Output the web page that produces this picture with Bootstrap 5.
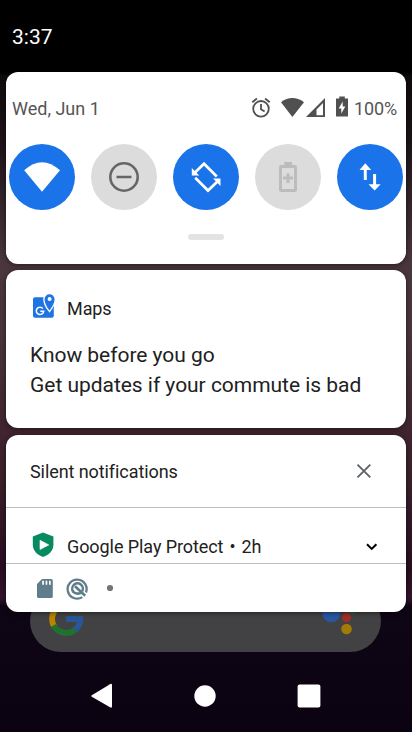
<!DOCTYPE html>
<html lang="en">
<head>
<meta charset="utf-8">
<meta name="viewport" content="width=device-width, initial-scale=1">
<title>Notification shade</title>
<link href="https://cdn.jsdelivr.net/npm/bootstrap@5.3.0/dist/css/bootstrap.min.css" rel="stylesheet">
<style>
body{font-family:Roboto,"Noto Sans",sans-serif;background:#000;color:#212121}
.screen{width:412px;height:732px;background:linear-gradient(#000 0,#000 72px,#0f0b0d 76px,#1c1317 140px,#35262b 205px,#4a363d 262px,#4a353d 330px,#40242f 432px,#3a212b 480px,#280e20 568px,#34142a 598px,#0e0515 606px,#0b0212 732px)}
.status{height:72px;padding:0 12px;font-size:21px;line-height:75px}
.panel{background:#fff;border:0;border-radius:12px;margin:0 6px;overflow:hidden;z-index:1;box-shadow:0 1px 5px rgba(0,0,0,.5)}
.quick{height:192px;margin-bottom:6px}
.maps{height:158px;margin-bottom:7px;padding:23px 24px 0}
.silent{height:177px}
.sysline{height:72px;padding:0 9px 0 6px;font-size:18px;color:#555}
.percent{margin-left:6px;letter-spacing:-.15px}
.tiles{padding:0 3px}
.tile{width:66px;height:66px;background:#dcdcdc}
.tile.on{background:#1a73e8}
.grip{width:36px;height:6px;background:#e3e3e3;margin-top:24px}
.app{font-size:18px;line-height:30px;letter-spacing:-.08px}
.message{font-size:21px;line-height:30px;margin-top:17px;letter-spacing:-.03px}
.nudge{padding-top:2px;line-height:28px}
.line{border-bottom:1px solid #bdbdbd}
.heading{height:73px}
.entry{height:56px}
.entry span{padding-bottom:1px}
.dot{margin:0 6px}
.search{height:62px;margin:-22px 31px 0 30px;background:#424143;border-radius:31px;padding:0 26px 0 18px}
.keys{height:72px;margin-top:8px;padding:0 91px}
svg{display:block;flex:none}
</style>
</head>
<body>
<main class="screen d-flex flex-column overflow-hidden">
  <header class="status text-white flex-shrink-0">3:37</header>

  <section class="panel card quick flex-shrink-0">
    <div class="sysline d-flex align-items-center justify-content-between">
      <span>Wed, Jun 1</span>
      <div class="d-flex align-items-center">
        <svg width="100" height="28" viewBox="248 94 100 28" fill="#505050">
          <circle cx="261" cy="108.8" r="7.8" fill="none" stroke="#505050" stroke-width="1.8"/>
          <path d="M261 104v5.2l3.6 2.4M252.3 102.3l4.6-3.8M269.7 102.3l-4.6-3.8" fill="none" stroke="#505050" stroke-width="1.8"/>
          <path d="M281 102.2Q292.3 93.8 304 102.2L292.4 117z"/>
          <path fill-rule="evenodd" d="M306 117L325 98v19zM316.500 115.300h6.500v-12.300l-6.500 6.500z"/>
          <path d="M336 98.600h3.300v-2h5.500v2h3.200v17.400q0 .6-.6.600h-10.800q-.600 0-.600-.600z"/>
          <path d="M342.700 101.500v5h2.600l-4 7v-5h-2.600z" fill="#fff"/>
        </svg>
        <span class="percent">100%</span>
      </div>
    </div>
    <div class="d-flex justify-content-between tiles">
      <div class="tile on rounded-circle"><svg width="66" height="66" fill="#fff"><path d="M15.200 26.300Q33 10 51 26.300L33 47.700z"/></svg></div>
      <div class="tile rounded-circle"><svg width="66" height="66" fill="none" stroke="#666" stroke-width="2.600"><circle cx="33" cy="33" r="13.700"/><path d="M25.500 33h15"/></svg></div>
      <div class="tile on rounded-circle"><svg width="66" height="66" fill="#fff"><path d="M22 28.500L31 19.700L43.800 32.500M44.500 37.500L35 46.500L22.200 33.700" fill="none" stroke="#fff" stroke-width="2.700"/><path d="M18.800 24v7.500h7.500zM47.500 42v-7.500h-7.500z"/></svg></div>
      <div class="tile rounded-circle"><svg width="66" height="66" fill="#bcbcbc"><path d="M29.300 18h7.800v4h-7.800zM31.500 29.500h3v3h3.500v3h-3.500v3.500h-3v-3.500h-3.500v-3h3.500z"/><rect x="25.500" y="22.500" width="15" height="24" rx=".8" fill="none" stroke="#bcbcbc" stroke-width="3"/></svg></div>
      <div class="tile on rounded-circle"><svg width="66" height="66" fill="#fff"><path d="M22.500 26L28.300 19.200L34.200 26h-4.400v10h-3v-10zM31.500 40.300h4.600V30h3v10.300h4.600L37.600 46.500z"/></svg></div>
    </div>
    <div class="grip rounded-pill mx-auto"></div>
  </section>

  <section class="panel card maps flex-shrink-0">
    <div class="app d-flex align-items-center">
      <svg width="37" height="30" viewBox="30 293 37 30"><rect x="33" y="297.300" width="20.800" height="20.500" rx="2" fill="#1f74e1"/><path d="M49.500 310.500C46.500 307 44.500 302 44.500 299.200a5 5 0 0 1 10.100 0c0 3.800-2.500 7.500-5.100 11.300z" fill="#1f74e1" stroke="#fff" stroke-width="2.600"/><path d="M49.500 310.500C46.500 307 44.500 302 44.500 299.200a5 5 0 0 1 10.100 0c0 3.800-2.500 7.500-5.100 11.300z" fill="#1f74e1"/><circle cx="49.600" cy="299" r="2" fill="#fff"/><path d="M42.800 308.400a3.700 3.700 0 1 0 .9 2.800h-3.400" fill="none" stroke="#fff" stroke-width="1.500"/></svg>
      <span class="nudge">Maps</span>
    </div>
    <div class="message text-nowrap">Know before you go<br>Get updates if your commute is bad</div>
  </section>

  <section class="panel card silent flex-shrink-0">
    <div class="line heading d-flex align-items-center justify-content-between app px-4">
      <span class="nudge">Silent notifications</span>
      <svg width="36" height="36" fill="none" stroke="#5f6368" stroke-width="1.900"><path d="M11.500 11.600l12.800 12.800M24.300 11.600L11.500 24.400"/></svg>
    </div>
    <div class="line entry d-flex align-items-end app px-4">
      <svg width="37" height="32" viewBox="30 531 37 32"><path d="M43 532.500l10.400 4v8.200c0 5.700-4.200 10.200-10.400 12.200-6-2-10.200-6.500-10.200-12.200v-8.200z" fill="#078a60"/><path d="M40 540.200v9.300l8.800-4.600z" fill="#fff" stroke="#fff" stroke-width=".6" stroke-linejoin="round"/></svg>
      <span class="text-nowrap">Google Play Protect<span class="dot">•</span>2h</span>
      <svg class="ms-auto" width="21" height="32" fill="none" stroke="#000" stroke-width="2"><path d="M6 13.200l4.700 4.700 4.700-4.700"/></svg>
    </div>
    <div class="px-4">
      <svg width="100" height="48" viewBox="30 564 100 48" fill="#607d8b"><path fill-rule="evenodd" d="M42 579h9.300q1.500 0 1.500 1.500v16q0 1.500-1.500 1.500H38.500q-1.500 0-1.500-1.500V584zM42.200 580.700v4h1.700v-4zM45.600 580.700v4h1.700v-4zM49 580.700v4h1.700v-4z"/><g fill="none" stroke="#607d8b"><path d="M82.300 597.100a9.500 9.500 0 1 1 3.700-4.600" stroke-width="2.300"/><path d="M73.300 591.800a5.300 5.300 0 1 1 8.800-.5" stroke-width="2.500"/><path d="M72.800 591.300q3.500 3.800 8 1.500M75 586.200l10.200 9.600" stroke-width="2.600"/></g><circle cx="110" cy="588" r="3.100" fill="#757575"/></svg>
    </div>
  </section>

  <div class="search d-flex justify-content-between flex-shrink-0">
    <svg width="36" height="62" viewBox="48 590 36 62" fill="none" stroke-width="6"><path d="M55.500 610a14.500 14.500 0 0 1 20-2" stroke="#a02c25"/><path d="M54.500 611a14.500 14.500 0 0 0 0 16" stroke="#b78503"/><path d="M53.500 625.500a14.500 14.500 0 0 0 22.500 3.500" stroke="#20702f"/><path d="M66 619h14.200q0 6.500-5 10.800" stroke="#295697"/></svg>
    <svg width="36" height="62" viewBox="319 590 36 62"><circle cx="331.300" cy="613.300" r="9" fill="#2a569f"/><circle cx="346.500" cy="617.500" r="4.600" fill="#9f2e26"/><circle cx="346.500" cy="629" r="5.300" fill="#a17b05"/><circle cx="353" cy="611.500" r="2.800" fill="#1d6b2d"/></svg>
  </div>

  <nav class="keys d-flex justify-content-between align-items-center flex-shrink-0">
    <svg width="22" height="26"><path d="M.8 12.200L19 1.200Q21 .200 21 2v21.500Q21 25.300 19 24.300L.8 13.700Q-.3 13 .8 12.200z" fill="#fff"/></svg>
    <svg width="22" height="22"><circle cx="11" cy="11" r="10.700" fill="#fff"/></svg>
    <svg width="24" height="24"><rect x=".6" y=".6" width="22.800" height="22.800" rx="2" fill="#fff"/></svg>
  </nav>
</main>
<script src="https://cdn.jsdelivr.net/npm/bootstrap@5.3.0/dist/js/bootstrap.bundle.min.js"></script>
</body>
</html>
